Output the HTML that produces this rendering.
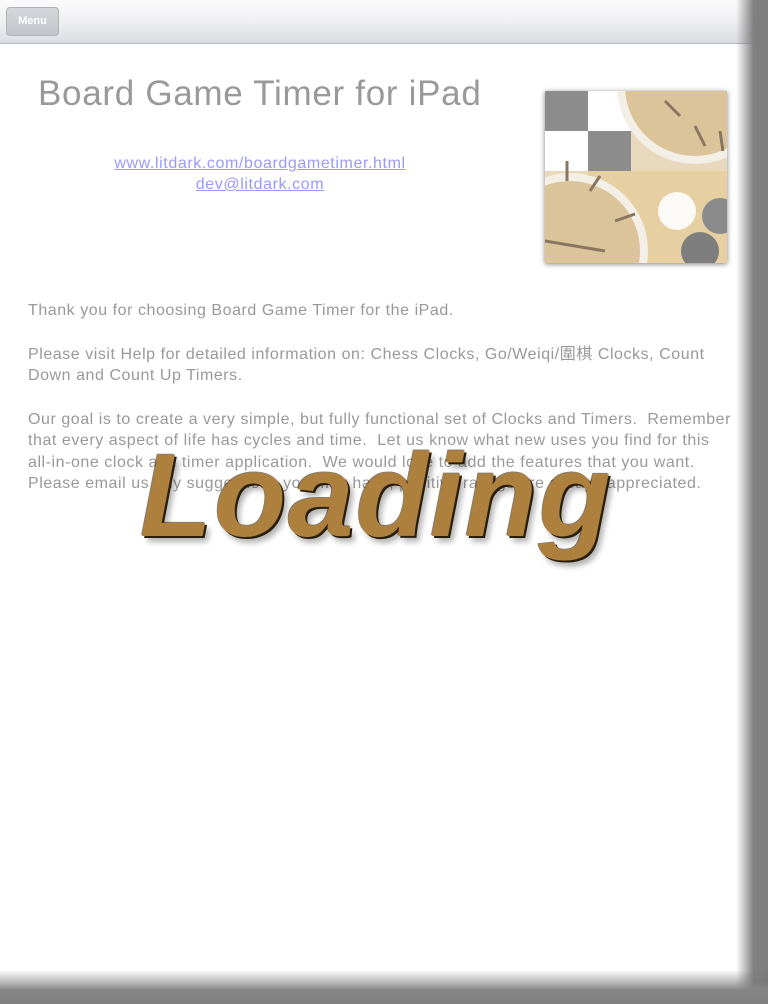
<!DOCTYPE html>
<html><head><meta charset="utf-8"><style>
html,body{margin:0;padding:0}
body{width:768px;height:1004px;background:#fff;position:relative;overflow:hidden;font-family:"Liberation Sans","Noto Sans CJK SC",sans-serif}
.rs{position:absolute;left:736px;top:0;width:32px;height:1004px;background:linear-gradient(90deg,rgba(120,120,120,0),rgba(120,120,120,.5) 30%,#808080 55%,#7c7c7c)}
.bs{position:absolute;left:0;top:970px;width:768px;height:34px;background:linear-gradient(rgba(120,120,120,0),rgba(120,120,120,.5) 35%,#858585 60%,#808080)}
.bar{position:absolute;left:0;top:0;width:768px;height:43px;background:linear-gradient(#fbfbfc,#f0f0f2 50%,#dcdde2);border-bottom:1px solid #b8b9c2}
.btn{position:absolute;left:6px;top:7px;width:51px;height:27px;border:1px solid #b0b2b8;border-radius:4px;background:linear-gradient(#d6d7db,#c3c5ca);color:#fff;font-size:11px;font-weight:bold;text-align:center;line-height:27px}
h1{position:absolute;left:38px;top:74px;margin:0;font-weight:normal;font-size:35px;letter-spacing:.7px;color:#999}
.links{position:absolute;left:60px;width:400px;top:153px;text-align:center;font-size:16px;line-height:21px;letter-spacing:.6px}
.links a{color:#99f;text-decoration:underline}
.icon{position:absolute;left:545px;top:91px;width:182px;height:172px;overflow:hidden;background:#e8d9bd;box-shadow:0 1px 5px rgba(0,0,0,.5)}
.txt{position:absolute;left:28px;top:300px;width:712px;font-size:16px;line-height:21.5px;letter-spacing:.55px;color:#999}
.txt p{margin:0 0 22px}
.nw{white-space:nowrap}
.load{position:absolute;left:140px;top:428px;font-size:118px;font-weight:bold;font-style:italic;color:#ad803e;letter-spacing:2px;text-shadow:2px 2px 0 #2a1d08,-1px -1px 0 rgba(60,40,10,.6),5px 6px 6px rgba(0,0,0,.3)}
</style></head><body>
<div class="bar"><div class="btn">Menu</div></div>
<h1>Board Game Timer for iPad</h1>
<div class="links"><a>www.litdark.com/boardgametimer.html</a><br><a>dev@litdark.com</a></div>
<div class="icon">
<svg width="182" height="172" viewBox="0 0 182 172">
<rect x="0" y="0" width="43" height="40" fill="#8c8c8c"/>
<rect x="43" y="0" width="43" height="40" fill="#fff"/>
<rect x="0" y="40" width="43" height="40" fill="#fff"/>
<rect x="43" y="40" width="43" height="40" fill="#8c8c8c"/>
<rect x="43" y="80" width="140" height="92" fill="#e6cfa0"/>
<circle cx="150" cy="-5" r="78" fill="#f3efe6"/>
<circle cx="150" cy="-5" r="70" fill="#dcc49a"/>
<circle cx="25" cy="160" r="78" fill="#f3efe6"/>
<circle cx="25" cy="160" r="70" fill="#dcc49a"/>
<circle cx="132" cy="120" r="19" fill="#fbfaf6"/>
<circle cx="175" cy="125" r="18" fill="#8a8a8a"/>
<circle cx="155" cy="160" r="19" fill="#7d7d7d"/>
<g stroke="#8a7660" stroke-width="3"><line x1="22" y1="70" x2="22" y2="90"/><line x1="55" y1="85" x2="45" y2="100"/><line x1="70" y1="130" x2="90" y2="123"/><line x1="0" y1="150" x2="60" y2="160"/><line x1="120" y1="10" x2="135" y2="25"/><line x1="150" y1="35" x2="160" y2="55"/><line x1="175" y1="40" x2="178" y2="60"/></g>
</svg></div>
<div class="txt">
<p>Thank you for choosing Board Game Timer for the iPad.</p>
<p>Please visit Help for detailed information on: Chess Clocks, Go/Weiqi/圍棋 Clocks, Count Down and Count Up Timers.</p>
<p>Our goal is to create a very simple, but fully functional set of Clocks and Timers.&nbsp; Remember that every aspect of life has cycles and time.&nbsp; Let us know what new uses you find for this <span class="nw">all-in-one</span> clock and timer application.&nbsp; We would love to add the features that you want.&nbsp; Please email us any suggestions you may have, positive ratings are always appreciated.</p>
</div>
<div class="load">Loading</div>
<div class="rs"></div>
<div class="bs"></div>
</body></html>
